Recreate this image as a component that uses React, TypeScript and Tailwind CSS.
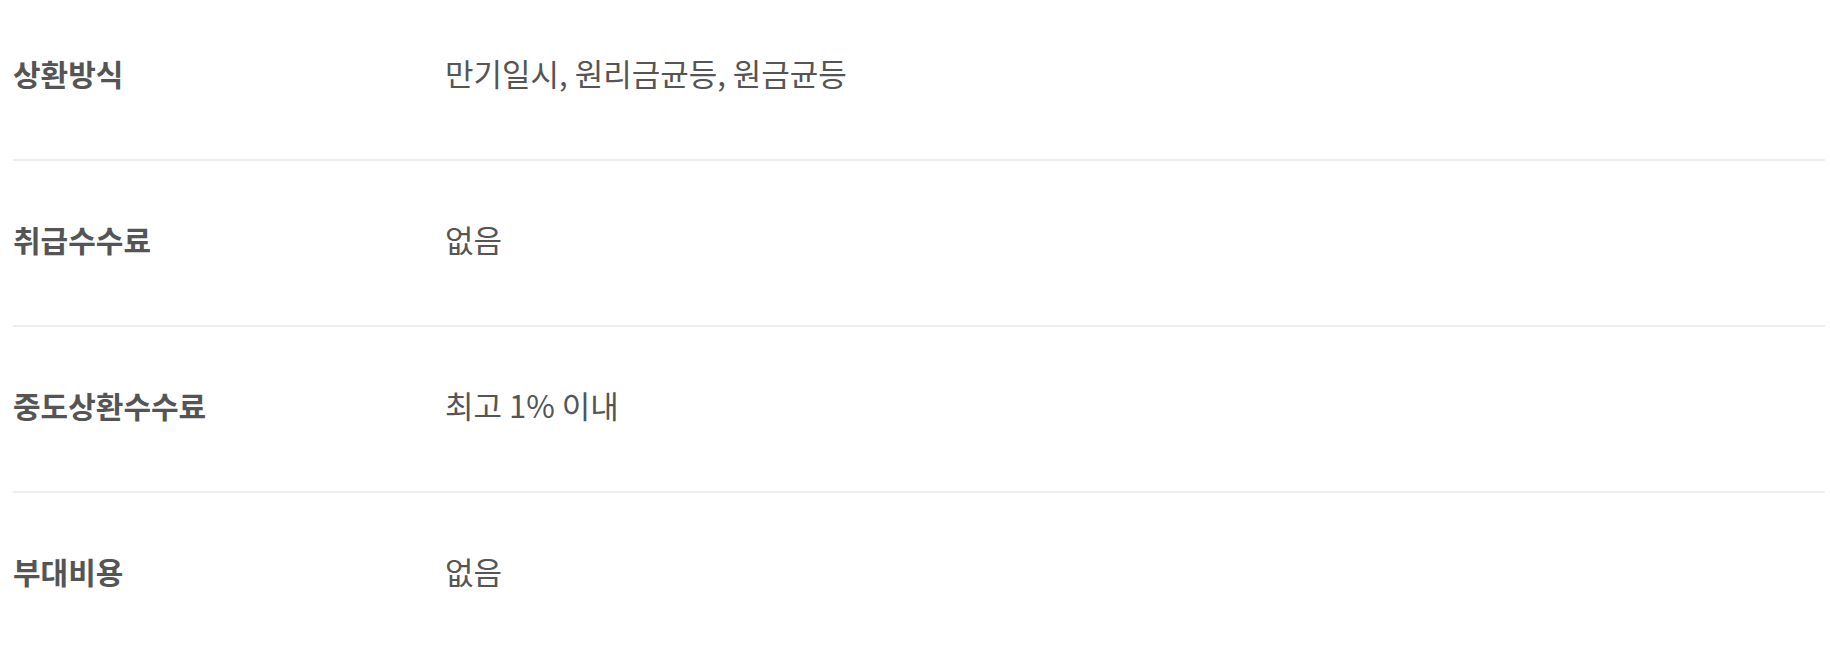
const rows = [
  { label: "상환방식", value: "만기일시, 원리금균등, 원금균등" },
  { label: "취급수수료", value: "없음" },
  { label: "중도상환수수료", value: "최고 1% 이내" },
  { label: "부대비용", value: "없음" },
];

export default function App() {
  return (
    <div className="bg-white min-h-screen font-['Noto_Sans_CJK_KR',sans-serif] text-[#555]">
      <dl className="ml-[13px] w-[1812px]">
        {rows.map((row, i) => (
          <div
            key={row.label}
            className={
              i === 0
                ? "flex items-center pt-[52px] pb-[65px] border-b-2 border-[#eeeeee]"
                : i === rows.length - 1
                ? "flex items-center pt-[57px] pb-[65px]"
                : "flex items-center pt-[57px] pb-[65px] border-b-2 border-[#eeeeee]"
            }
          >
            <dt className="w-[432px] shrink-0 text-[30px] leading-[42px] font-bold">
              {row.label}
            </dt>
            <dd className="text-[31px] leading-[42px]">{row.value}</dd>
          </div>
        ))}
      </dl>
    </div>
  );
}
